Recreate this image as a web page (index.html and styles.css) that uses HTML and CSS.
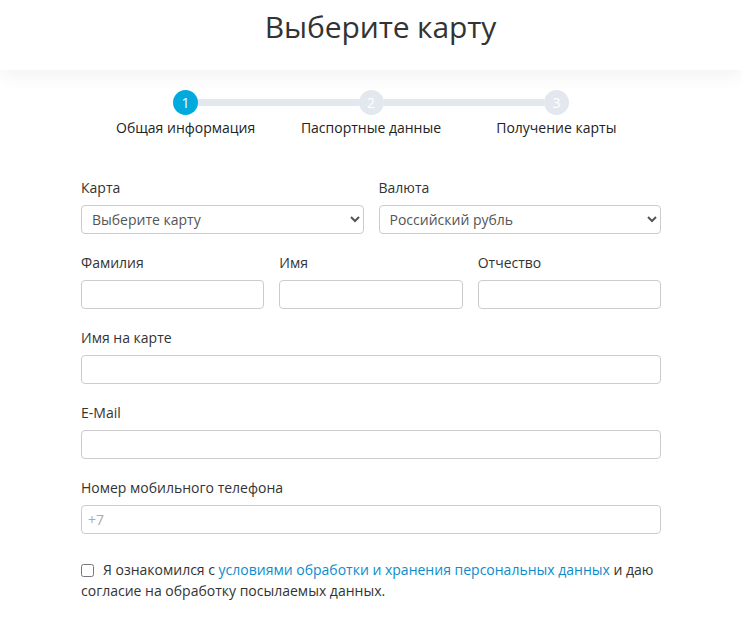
FILE: index.html
```html
<!DOCTYPE html>
<html lang="ru">
<head>
<meta charset="utf-8">
<title>Выберите карту</title>
<link rel="stylesheet" href="styles.css">
</head>
<body>
<header class="header">
  <h1 class="title">Выберите карту</h1>
</header>
<main class="page">
  <div class="stepper">
    <div class="track">
      <span class="dot dot-active">1</span>
      <span class="bar"></span>
      <span class="dot">2</span>
      <span class="bar"></span>
      <span class="dot">3</span>
    </div>
    <div class="step-labels">
      <span>Общая информация</span>
      <span>Паспортные данные</span>
      <span>Получение карты</span>
    </div>
  </div>

  <form class="form">
    <div class="row row-2">
      <div class="field">
        <label class="label">Карта</label>
        <select class="control select">
          <option>Выберите карту</option>
        </select>
      </div>
      <div class="field">
        <label class="label">Валюта</label>
        <select class="control select">
          <option>Российский рубль</option>
        </select>
      </div>
    </div>
    <div class="row row-3">
      <div class="field">
        <label class="label">Фамилия</label>
        <input class="control" type="text">
      </div>
      <div class="field">
        <label class="label">Имя</label>
        <input class="control" type="text">
      </div>
      <div class="field">
        <label class="label">Отчество</label>
        <input class="control" type="text">
      </div>
    </div>
    <div class="row">
      <div class="field">
        <label class="label">Имя на карте</label>
        <input class="control" type="text">
      </div>
    </div>
    <div class="row">
      <div class="field">
        <label class="label">E-Mail</label>
        <input class="control" type="text">
      </div>
    </div>
    <div class="row">
      <div class="field">
        <label class="label">Номер мобильного телефона</label>
        <input class="control" type="text" placeholder="+7">
      </div>
    </div>
    <p class="agree">
      <input class="check" type="checkbox">Я ознакомился с <a class="link" href="#">условиями обработки и хранения персональных данных</a> и даю согласие на обработку посылаемых данных.
    </p>
  </form>
</main>
</body>
</html>
```

FILE: styles.css
```css
* { box-sizing: border-box; }

html, body {
  margin: 0;
  padding: 0;
  background: #fff;
}

body {
  font-family: "Open Sans", "Liberation Sans", sans-serif;
  font-size: 14px;
  color: #333;
}

.header {
  height: 70px;
  display: flex;
  align-items: center;
  justify-content: center;
  padding-left: 19px;
  background: #fff;
  box-shadow: 0 6px 18px rgba(0, 0, 0, 0.05);
  position: relative;
}

.title {
  margin: 0 0 17px;
  font-size: 30px;
  font-weight: 400;
  color: #333;
  letter-spacing: -0.1px;
}

.page {
  width: 580px;
  margin: 0 auto;
}

.stepper {
  padding-top: 20px;
}

.track {
  width: 396px;
  margin: 0 auto;
  display: flex;
  align-items: center;
}

.dot {
  width: 25px;
  height: 25px;
  border-radius: 50%;
  background: #e3e8ef;
  color: #fff;
  font-size: 14px;
  display: flex;
  align-items: center;
  justify-content: center;
  flex: none;
}

.dot-active {
  background: #00aadc;
}

.bar {
  flex: 1;
  height: 7px;
  background: #e3e8ef;
}

.step-labels {
  width: 556px;
  margin: 3px auto 0;
  display: grid;
  grid-template-columns: 1fr 1fr 1fr;
  text-align: center;
  line-height: 20px;
  color: #222;
}

.form {
  margin-top: 40px;
}

.row {
  display: grid;
  grid-template-columns: minmax(0, 1fr);
  gap: 15px;
  margin-bottom: 19px;
}

.row-2 { grid-template-columns: repeat(2, minmax(0, 1fr)); }
.row-3 { grid-template-columns: repeat(3, minmax(0, 1fr)); }

.field {
  display: flex;
  flex-direction: column;
  min-width: 0;
}

.label {
  line-height: 20px;
  margin-bottom: 7px;
  color: #333;
}

.control {
  width: 100%;
  min-width: 0;
  height: 29px;
  border: 1px solid #ccc;
  border-radius: 4px;
  background: #fff;
  padding: 0 6px;
  font-family: "Open Sans", "Liberation Sans", sans-serif;
  font-size: 14px;
  color: #555;
  outline: none;
}

.select {
  padding: 0 4px 0 6px;
}

.control::placeholder {
  color: #aaa;
}

.agree {
  margin: 25px 0 0;
  line-height: 21px;
  color: #333;
}

.check {
  width: 13px;
  height: 13px;
  margin: 0 9px 0 0;
  vertical-align: -2px;
}

.link {
  color: #0c8ccc;
  text-decoration: none;
}
```
